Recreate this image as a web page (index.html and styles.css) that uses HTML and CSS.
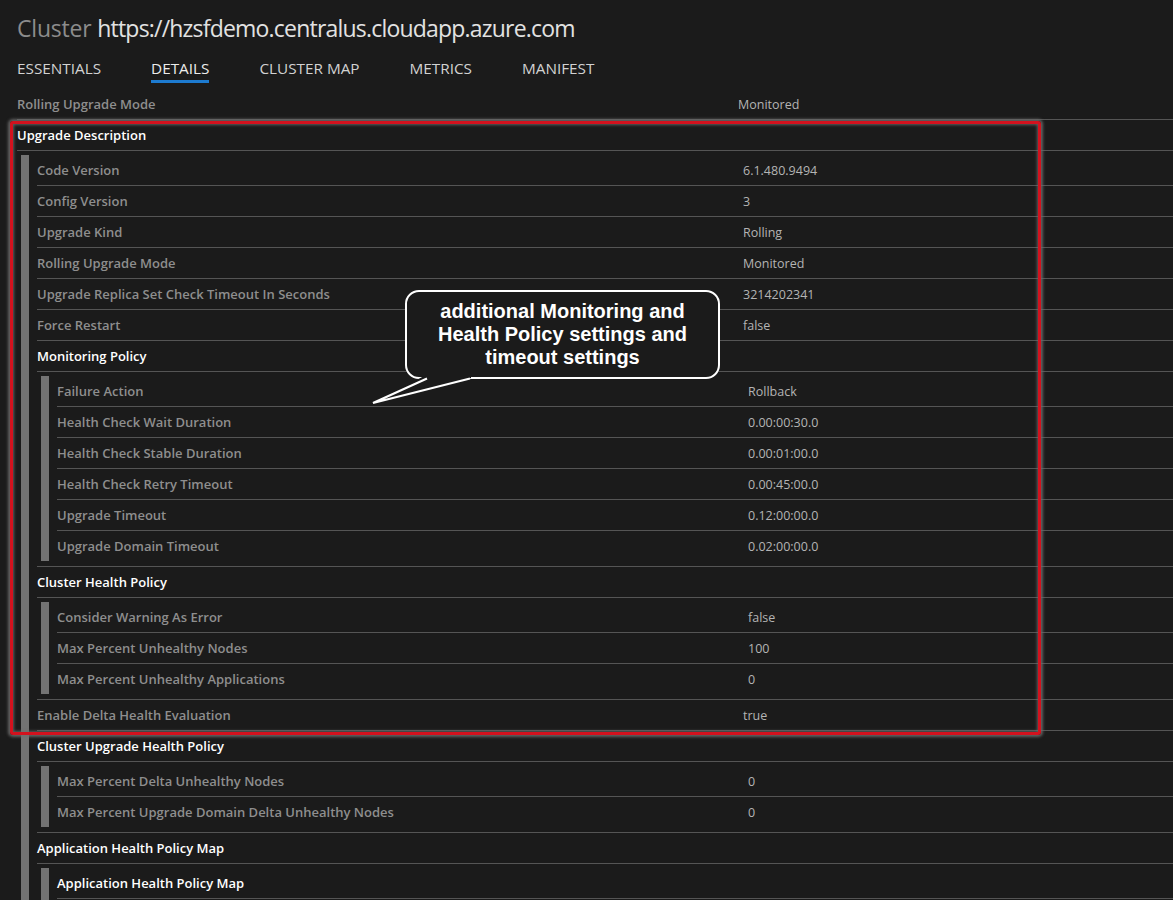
FILE: index.html
```html
<!DOCTYPE html>
<html lang="en">
<head>
<meta charset="utf-8">
<title>Cluster details</title>
<link rel="stylesheet" href="styles.css">
</head>
<body>
<div class="page">
  <h1 class="title"><span class="kind">Cluster</span> <span class="url">https://hzsfdemo.centralus.cloudapp.azure.com</span></h1>
  <nav class="tabs">
    <span class="tab">ESSENTIALS</span>
    <span class="tab active">DETAILS</span>
    <span class="tab">CLUSTER MAP</span>
    <span class="tab">METRICS</span>
    <span class="tab">MANIFEST</span>
  </nav>

  <div class="list">
    <div class="row"><span class="k">Rolling Upgrade Mode</span><span class="v">Monitored</span></div>
    <div class="row head"><span class="k">Upgrade Description</span></div>
    <div class="group">
      <div class="inner">
        <div class="row"><span class="k">Code Version</span><span class="v">6.1.480.9494</span></div>
        <div class="row"><span class="k">Config Version</span><span class="v">3</span></div>
        <div class="row"><span class="k">Upgrade Kind</span><span class="v">Rolling</span></div>
        <div class="row"><span class="k">Rolling Upgrade Mode</span><span class="v">Monitored</span></div>
        <div class="row"><span class="k">Upgrade Replica Set Check Timeout In Seconds</span><span class="v">3214202341</span></div>
        <div class="row"><span class="k">Force Restart</span><span class="v">false</span></div>
        <div class="row head"><span class="k">Monitoring Policy</span></div>
        <div class="group">
          <div class="inner">
            <div class="row"><span class="k">Failure Action</span><span class="v">Rollback</span></div>
            <div class="row"><span class="k">Health Check Wait Duration</span><span class="v">0.00:00:30.0</span></div>
            <div class="row"><span class="k">Health Check Stable Duration</span><span class="v">0.00:01:00.0</span></div>
            <div class="row"><span class="k">Health Check Retry Timeout</span><span class="v">0.00:45:00.0</span></div>
            <div class="row"><span class="k">Upgrade Timeout</span><span class="v">0.12:00:00.0</span></div>
            <div class="row"><span class="k">Upgrade Domain Timeout</span><span class="v">0.02:00:00.0</span></div>
          </div>
        </div>
        <div class="row head"><span class="k">Cluster Health Policy</span></div>
        <div class="group">
          <div class="inner">
            <div class="row"><span class="k">Consider Warning As Error</span><span class="v">false</span></div>
            <div class="row"><span class="k">Max Percent Unhealthy Nodes</span><span class="v">100</span></div>
            <div class="row"><span class="k">Max Percent Unhealthy Applications</span><span class="v">0</span></div>
          </div>
        </div>
        <div class="row"><span class="k">Enable Delta Health Evaluation</span><span class="v">true</span></div>
        <div class="row head"><span class="k">Cluster Upgrade Health Policy</span></div>
        <div class="group">
          <div class="inner">
            <div class="row"><span class="k">Max Percent Delta Unhealthy Nodes</span><span class="v">0</span></div>
            <div class="row"><span class="k">Max Percent Upgrade Domain Delta Unhealthy Nodes</span><span class="v">0</span></div>
          </div>
        </div>
        <div class="row head"><span class="k">Application Health Policy Map</span></div>
        <div class="group">
          <div class="inner continues">
            <div class="row head"><span class="k">Application Health Policy Map</span></div>
          </div>
        </div>
      </div>
    </div>
  </div>

  <div class="highlight"></div>
  <div class="callout">additional Monitoring and<br>Health Policy settings and<br>timeout settings</div>
  <svg class="callout-tail" width="110" height="40" viewBox="0 0 110 40" aria-hidden="true">
    <polygon points="56,5 101,5 101,8 3,33" fill="#1b1b1b"/>
    <polyline points="57,8.5 3,33 100,8.5" fill="none" stroke="#ffffff" stroke-width="2.2" stroke-linejoin="miter"/>
  </svg>
</div>
</body>
</html>
```

FILE: styles.css
```css
html, body {
  margin: 0;
  padding: 0;
  background: #1b1b1b;
}

body {
  font-family: "Open Sans", "Segoe UI", sans-serif;
  color: #d0d0d0;
}

.page {
  position: relative;
  padding-left: 17px;
  min-height: 900px;
}

.title {
  margin: 0;
  padding-top: 12px;
  font-size: 23px;
  line-height: 32px;
  font-weight: 400;
  color: #e2e2e2;
  letter-spacing: -0.2px;
  white-space: nowrap;
}

.title .kind {
  color: #8c8c8c;
}

.title .url {
  letter-spacing: -0.8px;
}

.tabs {
  display: flex;
  gap: 50px;
  margin-top: 14px;
}

.tab {
  font-size: 15.3px;
  line-height: 20px;
  color: #d2d2d2;
  padding-bottom: 2px;
  border-bottom: 3px solid transparent;
}

.tab.active {
  color: #ececec;
  border-bottom-color: #1d7bd0;
}

.list {
  margin-top: 6px;
}

.row {
  display: grid;
  grid-template-columns: calc(75% - 146px) 1fr;
  align-items: center;
  height: 30px;
  border-bottom: 1px solid #555555;
}

.k {
  font-size: 13px;
  font-weight: 600;
  color: #8e8e8e;
  white-space: nowrap;
}

.v {
  font-size: 12.5px;
  color: #b4b4b4;
  white-space: nowrap;
}

.row.head .k {
  color: #ffffff;
}

.group {
  padding: 4px 0 5px;
  border-bottom: 1px solid #555555;
}

.inner {
  margin-left: 4px;
  border-left: 8px solid #737373;
  padding-left: 8px;
}

.inner > .row:last-child {
  border-bottom: 1px solid #555555;
}

.inner > .row:last-child:not(.head) {
  border-bottom: none;
}

.inner.continues {
  padding-bottom: 12px;
}

.highlight {
  position: absolute;
  left: 10px;
  top: 121px;
  width: 1025px;
  height: 608px;
  border: 3px solid #d3121e;
  border-radius: 3px;
  box-shadow: 0 0 3px 2px rgba(110, 110, 110, 0.85), inset 0 0 3px 1px rgba(110, 110, 110, 0.8);
  pointer-events: none;
}

.callout {
  position: absolute;
  left: 405px;
  top: 290px;
  width: 311px;
  height: 85px;
  border: 2px solid #ffffff;
  border-radius: 14px;
  background: #1b1b1b;
  box-sizing: content-box;
  display: flex;
  align-items: center;
  justify-content: center;
  text-align: center;
  font-family: "Liberation Sans", Arial, sans-serif;
  font-weight: 700;
  font-size: 20px;
  line-height: 23px;
  color: #ffffff;
}

.callout-tail {
  position: absolute;
  left: 370px;
  top: 370px;
}
```
